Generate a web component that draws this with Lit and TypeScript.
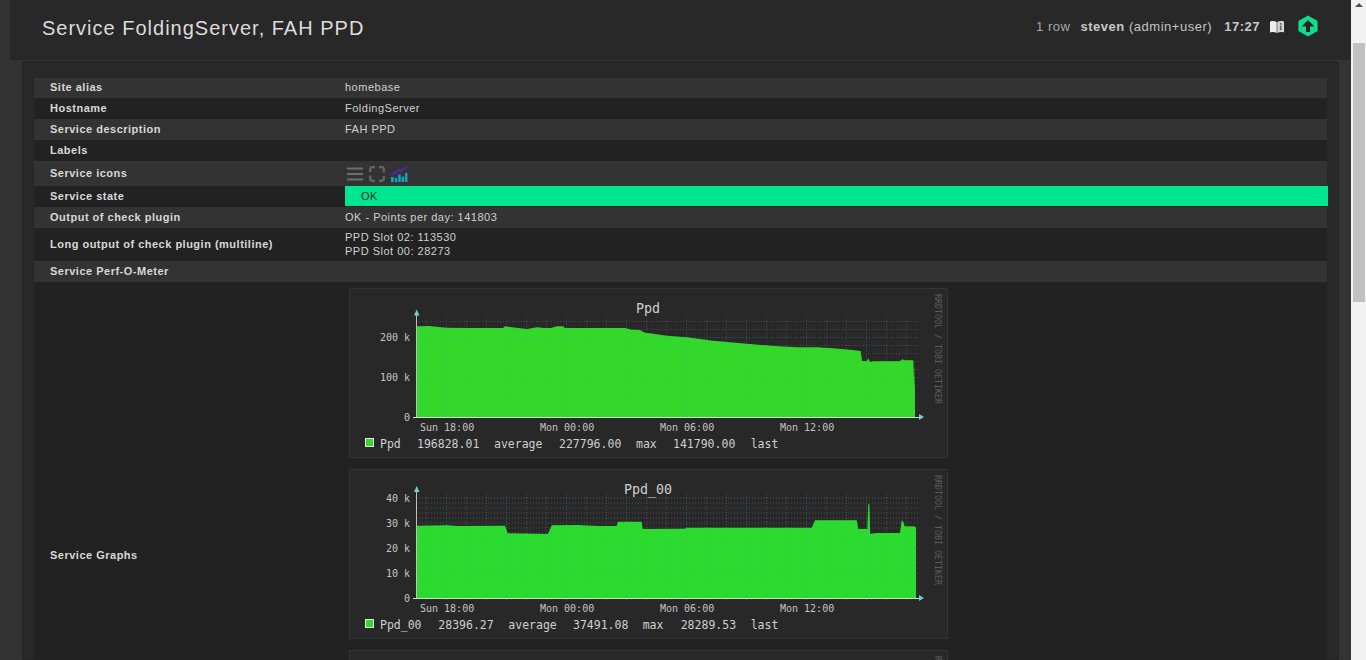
import { LitElement, html, svg, css } from "lit";
import { customElement } from "lit/decorators.js";

type Pt = [number, number];
interface Graph {
  id: string; title: string; titleX: number; fill: string; base: number; top: number; step: number;
  majors: number[]; ylabels: [string, number][];
  points: Pt[]; legend: [string, number][];
}

const graphs: Graph[] = [
  {
    id: "ppd", title: "Ppd", titleX: 299, fill: "#33d82a", base: 129, top: 33.5, step: 8,
    majors: [49.5, 89.5],
    ylabels: [["200 k", 49], ["100 k", 89], ["0", 129]],
    legend: [["Ppd", 31], ["196828.01", 68], ["average", 145], ["227796.00", 210], ["max", 287], ["141790.00", 324], ["last", 401.7]],
    points: [[67.5,38.3],[80,38],[97.5,39.7],[120,40],[154,40],[156,38.3],[169,40],[178,41],[188,39.3],[195,40],[202,40],[208,38.3],[214,38.3],[216,40],[276,40],[283,41.7],[291,42],[296,44.7],[301,45.3],[318,47.7],[338,49.3],[364,52.7],[398,55.7],[421,57.7],[448,59.3],[468,59.3],[484,60.3],[501,61.7],[511.7,63],[513,73],[518,73],[519.3,70.3],[521,74],[525,73.3],[551,73.3],[553,71.3],[556,72.3],[564.3,72.3],[565.3,100.3],[566,72.3],[566,129]],
  },
  {
    id: "ppd00", title: "Ppd_00", titleX: 299, fill: "#2bdb2f", base: 129, top: 29, step: 5,
    majors: [29, 54, 79, 104],
    ylabels: [["40 k", 29], ["30 k", 54], ["20 k", 79], ["10 k", 104], ["0", 129]],
    legend: [["Ppd_00", 31], ["28396.27", 89.3], ["average", 159.3], ["37491.08", 224], ["max", 293.7], ["28289.53", 331.7], ["last", 401.7]],
    points: [[67.5,56.7],[97.5,56.3],[109,57],[156,56.7],[158.7,64.3],[199,65],[202.7,56.3],[229,56],[249,57],[267.7,57],[269,52.7],[292.7,52.7],[293.7,60],[336,59.7],[337,58.7],[462.7,58.7],[466,51.3],[507.7,51.3],[509.3,60],[518.3,60],[519.3,35],[520.3,35],[521.3,65],[527.7,64],[551,64],[552.7,51.3],[554.3,52.7],[555.7,57.3],[564.3,57.3],[567,58.3],[567,129]],
  },
];

const rows: { label: string; cls: string; value?: unknown }[] = [
  { label: "Site alias", cls: "h20", value: "homebase" },
  { label: "Hostname", cls: "", value: "FoldingServer" },
  { label: "Service description", cls: "", value: "FAH PPD" },
  { label: "Labels", cls: "" },
];

@customElement("app-root")
export class AppRoot extends LitElement {
  static styles = css`
    :host { display: flex; width: 1366px; height: 660px; overflow: hidden; background: #333; font-family: "Liberation Sans", Arial, sans-serif; color: #ddd; }
    .page { flex: 1; min-width: 0; padding-left: 10px; display: flex; flex-direction: column; }
    header { flex: 0 0 60px; background: #282828; display: flex; align-items: center; padding: 0 33px 0 32px; }
    h1 { margin: 0; font-size: 20px; font-weight: 400; letter-spacing: 1px; color: #dcdcdc; flex: 1; position: relative; top: -2px; }
    .status { display: flex; align-items: center; font-size: 13px; letter-spacing: 0.52px; color: #c4c4c4; position: relative; top: -4px; }
    .status b { color: #c8c8c8; }
    .rowcount { margin-right: 10px; color: #a8a8a8; }
    .user { margin-right: 12px; }
    .book { margin: 2px 0 0 9px; }
    .logo { margin: 0 0 0 13px; }
    main { flex: 1; min-height: 0; margin: 1px 12px 0; padding: 17px 12px 0 12px; background: #282828; border-radius: 3px 3px 0 0; box-shadow: inset 0 0 0 1px #262626; overflow: hidden; }
    .row { display: flex; box-sizing: border-box; min-height: 21px; align-items: stretch; font-size: 11px; letter-spacing: 0.5px; background: #222; }
    .row.alt { background: #333; }
    .row.h20 { min-height: 20px; }
    .row.h25 { min-height: 25px; }
    .label { flex: 0 0 295px; padding: 0 0 2px 16px; font-weight: 700; color: #d8d8d8; display: flex; align-items: center; }
    .label.tall { padding-bottom: 0; }
    .value { flex: 1; min-width: 0; padding-bottom: 2px; display: flex; align-items: center; color: #d0d0d0; }
    .value.multi { display: block; padding: 2px 0 3px; line-height: 14px; }
    .state { background: #00e58f; color: #1e2a25; margin: 0 -1px 1px 0; padding: 0 0 0 16px; }
    .icons { gap: 4px; padding: 0 0 0 1px; }
    .graphs { display: flex; flex-direction: column; align-items: flex-start; gap: 11px; padding: 6px 0 8px 4px; }
    .card { display: block; width: 599px; height: 170px; background: #282828; box-shadow: inset 0 0 0 1px #333; flex: none; }
    .scrollbar { flex: 0 0 15px; background: #f1f1f1; display: flex; flex-direction: column; align-items: center; }
    .arrow { width: 0; height: 0; margin-top: 3px; border: solid transparent; border-width: 0 4px 4px; border-bottom-color: #505050; }
    .thumb { width: 12px; height: 259px; margin: 36px 0 0 1px; background: #c1c1c1; }
    text { font-family: "DejaVu Sans Mono", monospace; letter-spacing: 0; }
    .axis { font-size: 10px; fill: #c4c4c4; }
    .title { font-size: 13.3px; fill: #cfcfcf; text-anchor: middle; }
    .legend { font-size: 11.5px; fill: #cfcfcf; }
    .mark { font-size: 8.3px; fill: #5c5c5c; }
  `;

  private graph(g: Graph) {
    const xs: number[] = [];
    for (let x = 77.5; x < 560; x += 20) xs.push(x);
    const ys: number[] = [];
    for (let y = g.top; y < g.base; y += g.step) ys.push(y);
    const isMajorX = (i: number) => i % 3 === 1;
    const gridLines = (major: string, minor: string) => svg`
      ${ys.map((y) => svg`<line x1="67" x2="570" y1=${y} y2=${y} stroke=${g.majors.includes(y) ? major : minor} stroke-dasharray="1 2"></line>`)}
      ${xs.map((x, i) => svg`<line x1=${x} x2=${x} y1=${g.top - 4} y2=${g.base + 2} stroke=${isMajorX(i) ? major : minor} stroke-dasharray="1 2"></line>`)}`;
    const pts = [[67.5, g.base], ...g.points].map((p) => p.join(",")).join(" ");
    const times: [string, number][] = [["Sun 18:00", 71], ["Mon 00:00", 191], ["Mon 06:00", 311], ["Mon 12:00", 431]];
    return html`<svg class="card" viewBox="0 0 599 170" width="599" height="170">
      <clipPath id=${`area-${g.id}`}><polygon points=${pts}></polygon></clipPath>
      ${gridLines("#2a6062", "#4c4c4c")}
      <polygon points=${pts} fill=${g.fill}></polygon>
      <g clip-path=${`url(#area-${g.id})`}>${gridLines("#30c060", "#31d02b")}</g>
      <line x1="67.5" x2="67.5" y1=${g.top - 11} y2=${g.base} stroke="#bfbfbf"></line>
      <line x1="64" x2="572" y1=${g.base + 0.5} y2=${g.base + 0.5} stroke="#c9e6c4"></line>
      <polygon points=${`65,${g.top - 6} 70.5,${g.top - 6} 67.7,${g.top - 12}`} fill="#6fcfd0"></polygon>
      <polygon points=${`570,${g.base - 3} 570,${g.base + 3} 575,${g.base}`} fill="#6fcfd0"></polygon>
      <text class="title" x=${g.titleX} y="25">${g.title}</text>
      ${g.ylabels.map(([t, y]) => svg`<text class="axis" x="61" y=${y + 4} text-anchor="end">${t}</text>`)}
      ${times.map(([t, x]) => svg`<text class="axis" x=${x} y="143">${t}</text>`)}
      <rect x="16.5" y="150.5" width="8" height="8" fill=${g.fill} stroke="#e8e8e8"></rect>
      ${g.legend.map(([t, x]) => svg`<text class="legend" x=${x} y="159.5">${t}</text>`)}
      <text class="mark" x="586" y="6" transform="rotate(90 586 6)">RRDTOOL / TOBI OETIKER</text>
    </svg>`;
  }

  render() {
    return html`
      <div class="page">
        <header>
          <h1>Service FoldingServer, FAH PPD</h1>
          <div class="status">
            <span class="rowcount">1 row</span>
            <span class="user"><b>steven</b> (admin+user)</span>
            <b>17:27</b>
            <svg class="book" width="16" height="14" viewBox="0 0 16 14">
              <path d="M1 1.5 C3.5 .8 6 1 7.7 2 V13 C6 12 3.5 11.8 1 12.5 Z" fill="#eee"></path>
              <path d="M8.3 2 C10 1 12.5 .8 15 1.5 V12.5 C12.5 11.8 10 12 8.3 13 Z" fill="#d8d8d8"></path>
              <rect x="10.8" y="3" width="1.8" height="1.8" fill="#666"></rect>
              <rect x="10.8" y="5.6" width="1.8" height="4.6" fill="#666"></rect>
            </svg>
            <svg class="logo" width="20" height="22" viewBox="0 0 20 22">
              <path d="M10 0.5 L19.6 6 V16 L10 21.5 L.4 16 V6 Z" fill="#0fdc8c"></path>
              <path d="M10 5 L16.5 11.5 H12 V17 H8 V11.5 H3.5 Z" fill="#252525"></path>
            </svg>
          </div>
        </header>
        <main>
          ${rows.map((r, i) => html`<div class="row ${i % 2 === 0 ? "alt" : ""} ${r.cls}"><div class="label">${r.label}</div><div class="value">${r.value ?? ""}</div></div>`)}
          <div class="row alt h25">
            <div class="label">Service icons</div>
            <div class="value icons">
              <svg width="18" height="18" viewBox="0 0 18 18">
                <path d="M1 3.5 H17 M1 9 H17 M1 14.5 H17" stroke="#6e6e6e" stroke-width="2"></path>
              </svg>
              <svg width="18" height="18" viewBox="0 0 18 18" fill="none" stroke="#666" stroke-width="2.2">
                <path d="M7 2.2 H4.5 Q2.2 2.2 2.2 4.5 V7"></path>
                <path d="M11 2.2 H13.5 Q15.8 2.2 15.8 4.5 V7.5"></path>
                <path d="M15.8 11 V13.5 Q15.8 15.8 13.5 15.8 H11"></path>
                <path d="M7 15.8 H4.5 Q2.2 15.8 2.2 13.5 V10.5"></path>
              </svg>
              <svg width="18" height="18" viewBox="0 0 18 18">
                <path d="M1 9.5 L5 8 L8 5 L11 6 L15 3 L17 2" fill="none" stroke="#5a22b0" stroke-width="2"></path>
                <path d="M1 12h2.6v5H1z M4.7 13h2.6v4H4.7z M8.2 9.5h2.6V17H8.2z M11.7 11.5h2.4V17h-2.4z M15 8h2.4v9H15z" fill="#0aa6c4"></path>
              </svg>
            </div>
          </div>
          <div class="row">
            <div class="label">Service state</div>
            <div class="value state">OK</div>
          </div>
          <div class="row alt"><div class="label">Output of check plugin</div><div class="value">OK - Points per day: 141803</div></div>
          <div class="row"><div class="label">Long output of check plugin (multiline)</div><div class="value multi">PPD Slot 02: 113530<br />PPD Slot 00: 28273</div></div>
          <div class="row alt"><div class="label">Service Perf-O-Meter</div><div class="value"></div></div>
          <div class="row">
            <div class="label tall">Service Graphs</div>
            <div class="value graphs">
              ${graphs.map((g) => this.graph(g))}
              <svg class="card" viewBox="0 0 599 170" width="599" height="170">
                <text class="mark" x="586" y="6" transform="rotate(90 586 6)">RRDTOOL / TOBI OETIKER</text>
              </svg>
            </div>
          </div>
        </main>
      </div>
      <div class="scrollbar"><div class="arrow"></div><div class="thumb"></div></div>
    `;
  }
}
